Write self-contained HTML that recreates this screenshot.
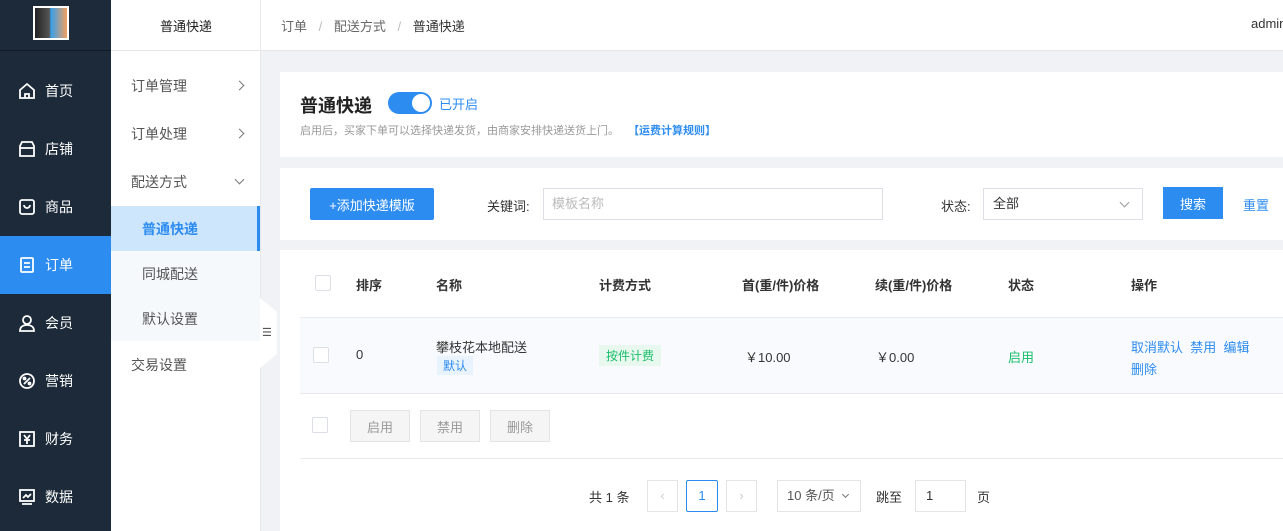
<!DOCTYPE html>
<html><head><meta charset="utf-8"><style>
*{margin:0;padding:0;box-sizing:border-box}
body{width:1283px;height:531px;overflow:hidden;background:#f0f2f5;font-family:"Liberation Sans","Noto Sans CJK SC",sans-serif;font-size:13px;color:#333;position:relative}
.abs{position:absolute}
.side{left:0;top:0;width:111px;height:531px;background:#1c2a3a}
.logo{left:0;top:0;width:111px;height:51px;border-bottom:1px solid #111c28}
.mi{left:0;width:111px;height:58px;color:#fff;font-size:14px;display:flex;align-items:center;padding-left:18px}
.mi svg{width:18px;height:18px;margin-right:9px;fill:none;stroke:#fff;stroke-width:1.8}
.sub{left:111px;top:0;width:150px;height:531px;background:#fff;border-right:1px solid #e8e8e8}
.si{left:111px;width:149px;height:45px;display:flex;align-items:center;color:#555;font-size:14px}
.top{left:261px;top:0;width:1022px;height:51px;background:#fff;border-bottom:1px solid #e6e6e6}
.card{background:#fff;left:280px;width:1003px}
.th{font-weight:bold;color:#333;font-size:13px}
.cb{width:16px;height:16px;border:1px solid #dcdfe6;border-radius:2px;background:#fff}
.btn{height:32px;border:1px solid #e4e4e4;background:#f5f5f5;color:#999;font-size:13px;display:flex;align-items:center;justify-content:center}
.a{color:#2d8cf0}
.chev{position:absolute;left:125px;width:7px;height:7px;border-right:1.3px solid #777;border-top:1.3px solid #777;transform:rotate(45deg)}
</style></head><body>
<div class="abs side"></div>
<div class="abs logo"><div class="abs" style="left:33px;top:6px;width:36px;height:34px;background:#fff"><div style="margin:2px 2px;width:32px;height:30px;background:linear-gradient(90deg,#222 0,#555 45%,#3aa0e8 50%,#f0a060 100%)"></div></div></div>
<div class="abs mi" style="top:62px"><svg viewBox="0 0 18 18"><path d="M2 8L9 2l7 6v8H2z"/><path d="M7 16v-4h4v4"/></svg>首页</div>
<div class="abs mi" style="top:120px"><svg viewBox="0 0 18 18"><path d="M2 6l2-4h10l2 4v10H2z"/><path d="M2 8h14"/></svg>店铺</div>
<div class="abs mi" style="top:178px"><svg viewBox="0 0 18 18"><rect x="2" y="2" width="14" height="14" rx="2"/><path d="M6 7a3 3 0 006 0"/></svg>商品</div>
<div class="abs mi" style="top:236px;background:#2d8cf0"><svg viewBox="0 0 18 18"><rect x="3" y="2" width="12" height="14" rx="1"/><path d="M6 7h6M6 11h6"/></svg>订单</div>
<div class="abs mi" style="top:294px"><svg viewBox="0 0 18 18"><circle cx="9" cy="6" r="4"/><path d="M2 17c0-4 3-6 7-6s7 2 7 6z"/></svg>会员</div>
<div class="abs mi" style="top:352px"><svg viewBox="0 0 18 18"><circle cx="9" cy="9" r="7"/><path d="M6 12l6-6"/><circle cx="6.5" cy="6.5" r="1"/><circle cx="11.5" cy="11.5" r="1"/></svg>营销</div>
<div class="abs mi" style="top:410px"><svg viewBox="0 0 18 18"><rect x="2" y="2" width="14" height="14"/><path d="M6 5l3 4 3-4M9 9v5M6 10h6"/></svg>财务</div>
<div class="abs mi" style="top:468px"><svg viewBox="0 0 18 18"><rect x="2" y="2" width="14" height="11"/><path d="M5 10l3-3 2 2 3-3M4 16h10"/></svg>数据</div>

<div class="abs sub"></div>
<div class="abs" style="left:111px;top:0;width:150px;height:51px;border-bottom:1px solid #e6e6e6;display:flex;align-items:center;justify-content:center;font-size:13px;color:#222">普通快递</div>
<div class="abs si" style="top:63px;padding-left:20px">订单管理<span class="chev" style="top:19px"></span></div>
<div class="abs si" style="top:111px;padding-left:20px">订单处理<span class="chev" style="top:19px"></span></div>
<div class="abs si" style="top:159px;padding-left:20px">配送方式<span class="chev" style="top:17px;transform:rotate(135deg)"></span></div>
<div class="abs" style="left:111px;top:206px;width:149px;height:135px;background:#f5f9fc"></div>
<div class="abs si" style="top:206px;background:#cde6fb;color:#2d8cf0;font-weight:bold;padding-left:31px;border-right:3px solid #2d8cf0;width:149px">普通快递</div>
<div class="abs si" style="top:251px;padding-left:31px">同城配送</div>
<div class="abs si" style="top:296px;padding-left:31px">默认设置</div>
<div class="abs si" style="top:342px;padding-left:20px">交易设置</div>
<div class="abs" style="left:260px;top:298px;width:17px;height:70px;background:#fff;clip-path:polygon(0 0,100% 20%,100% 80%,0 100%)"></div>
<div class="abs" style="left:262px;top:326px;font-size:11px;color:#555">☰</div>

<div class="abs top"></div>
<div class="abs" style="left:281px;top:16px;font-size:13px;color:#666">订单 <span style="color:#bbb;margin:0 8px">/</span> 配送方式 <span style="color:#bbb;margin:0 8px">/</span> <span style="color:#333">普通快递</span></div>
<div class="abs" style="left:1251px;top:16px;color:#333">admin</div>

<div class="abs card" style="top:72px;height:85px"></div>
<div class="abs" style="left:300px;top:92px;font-size:18px;font-weight:bold;color:#222">普通快递</div>
<div class="abs" style="left:388px;top:92px;width:44px;height:22px;border-radius:11px;background:#2d8cf0"><div class="abs" style="right:2px;top:2px;width:18px;height:18px;border-radius:50%;background:#fff"></div></div>
<div class="abs" style="left:439px;top:94px;font-size:13px;color:#2d8cf0">已开启</div>
<div class="abs" style="left:300px;top:122px;font-size:11px;color:#999">启用后，买家下单可以选择快递发货，由商家安排快递送货上门。 <b style="color:#2d8cf0;margin-left:6px">【运费计算规则】</b></div>

<div class="abs card" style="top:168px;height:72px"></div>
<div class="abs" style="left:310px;top:188px;width:124px;height:32px;background:#2d8cf0;color:#fff;border-radius:2px;display:flex;align-items:center;justify-content:center">+添加快递模版</div>
<div class="abs" style="left:487px;top:196px">关键词:</div>
<div class="abs" style="left:543px;top:188px;width:340px;height:32px;border:1px solid #dcdfe6;color:#bbb;padding:0 8px;line-height:30px">模板名称</div>
<div class="abs" style="left:941px;top:196px">状态:</div>
<div class="abs" style="left:983px;top:188px;width:160px;height:32px;border:1px solid #dcdfe6;padding:0 9px;line-height:30px">全部<span class="abs" style="right:14px;top:10px;width:7px;height:7px;border-right:1.2px solid #999;border-bottom:1.2px solid #999;transform:rotate(45deg)"></span></div>
<div class="abs" style="left:1163px;top:187px;width:60px;height:32px;background:#2d8cf0;color:#fff;display:flex;align-items:center;justify-content:center">搜索</div>
<div class="abs a" style="left:1243px;top:195px">重置</div>

<div class="abs card" style="top:250px;height:281px"></div>
<div class="abs cb" style="left:315px;top:275px"></div>
<div class="abs th" style="left:356px;top:275px">排序</div>
<div class="abs th" style="left:436px;top:275px">名称</div>
<div class="abs th" style="left:599px;top:275px">计费方式</div>
<div class="abs th" style="left:742px;top:275px">首(重/件)价格</div>
<div class="abs th" style="left:875px;top:275px">续(重/件)价格</div>
<div class="abs th" style="left:1008px;top:275px">状态</div>
<div class="abs th" style="left:1131px;top:275px">操作</div>
<div class="abs" style="left:300px;top:317px;width:983px;height:77px;background:#f8fafd;border-top:1px solid #e8eaec;border-bottom:1px solid #e8eaec"></div>
<div class="abs cb" style="left:313px;top:347px"></div>
<div class="abs" style="left:356px;top:347px">0</div>
<div class="abs" style="left:436px;top:337px">攀枝花本地配送</div>
<div class="abs" style="left:437px;top:356px;background:#e8f3fe;color:#2d8cf0;font-size:12px;padding:1px 6px">默认</div>
<div class="abs" style="left:599px;top:345px;background:#e9f8ee;color:#19be6b;font-size:12px;padding:2px 7px">按件计费</div>
<div class="abs" style="left:745px;top:347px">￥10.00</div>
<div class="abs" style="left:876px;top:347px">￥0.00</div>
<div class="abs" style="left:1008px;top:347px;color:#19be6b">启用</div>
<div class="abs a" style="left:1131px;top:337px">取消默认&nbsp; 禁用&nbsp; 编辑</div>
<div class="abs a" style="left:1131px;top:359px">删除</div>
<div class="abs cb" style="left:312px;top:417px"></div>
<div class="abs btn" style="left:350px;top:410px;width:60px">启用</div>
<div class="abs btn" style="left:420px;top:410px;width:60px">禁用</div>
<div class="abs btn" style="left:490px;top:410px;width:60px">删除</div>
<div class="abs" style="left:300px;top:458px;width:983px;border-top:1px solid #e8eaec"></div>
<div class="abs" style="left:589px;top:487px">共 1 条</div>
<div class="abs" style="left:647px;top:480px;width:31px;height:32px;border:1px solid #e4e4e4;color:#ccc;text-align:center;line-height:30px">‹</div>
<div class="abs" style="left:686px;top:480px;width:32px;height:32px;border:1px solid #2d8cf0;color:#2d8cf0;text-align:center;line-height:30px;border-radius:2px">1</div>
<div class="abs" style="left:726px;top:480px;width:31px;height:32px;border:1px solid #e4e4e4;color:#ccc;text-align:center;line-height:30px">›</div>
<div class="abs" style="left:777px;top:480px;width:84px;height:32px;border:1px solid #e4e4e4;padding:0 9px;line-height:30px;color:#555">10 条/页<span class="abs" style="right:12px;top:11px;width:5px;height:5px;border-right:1.2px solid #777;border-bottom:1.2px solid #777;transform:rotate(45deg)"></span></div>
<div class="abs" style="left:876px;top:487px">跳至</div>
<div class="abs" style="left:915px;top:480px;width:51px;height:32px;border:1px solid #e4e4e4;padding:0 10px;line-height:30px">1</div>
<div class="abs" style="left:977px;top:487px">页</div>
</body></html>
